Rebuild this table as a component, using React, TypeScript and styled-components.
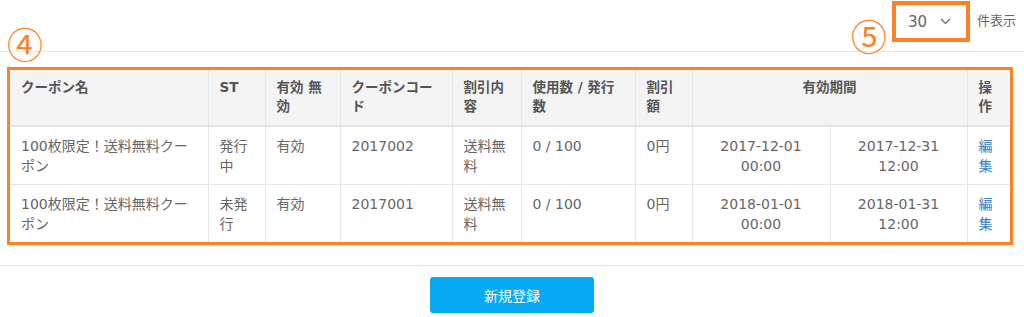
import React from 'react';
import styled, { createGlobalStyle } from 'styled-components';

const GlobalStyle = createGlobalStyle`
  html, body {
    margin: 0;
    padding: 0;
    background: #fff;
  }
  body {
    font-family: "DejaVu Sans", "Noto Sans CJK JP", sans-serif;
    font-size: 14px;
    color: #666;
  }
`;

const ORANGE = '#fb8226';
const FONT = '"DejaVu Sans", "Noto Sans CJK JP", sans-serif';

type Coupon = {
  name: string;
  status: string;
  valid: string;
  code: string;
  content: string;
  usage: string;
  discount: string;
  from: [string, string];
  to: [string, string];
};

const coupons: Coupon[] = [
  {
    name: '100枚限定！送料無料クーポン',
    status: '発行中',
    valid: '有効',
    code: '2017002',
    content: '送料無料',
    usage: '0 / 100',
    discount: '0円',
    from: ['2017-12-01', '00:00'],
    to: ['2017-12-31', '12:00'],
  },
  {
    name: '100枚限定！送料無料クーポン',
    status: '未発行',
    valid: '有効',
    code: '2017001',
    content: '送料無料',
    usage: '0 / 100',
    discount: '0円',
    from: ['2018-01-01', '00:00'],
    to: ['2018-01-31', '12:00'],
  },
];

const widths = [198, 57, 75, 112, 69, 114, 57, 138, 137, 43];

function App() {
  return (
    <Page>
      <GlobalStyle />
      <TopBar>
        <Marker style={{ left: 7, top: 25 }}>④</Marker>
        <Marker style={{ left: 851, top: 17 }}>⑤</Marker>
        <SelectBox>
          <span>30</span>
          <svg width="11" height="7" viewBox="0 0 11 7">
            <polyline points="1,1 5.5,5.5 10,1" fill="none" stroke="#666" strokeWidth="1.2" />
          </svg>
        </SelectBox>
        <PerPage>件表示</PerPage>
      </TopBar>

      <TableArea>
        <Frame>
          <Table>
            <colgroup>
              {widths.map((w, i) => (
                <col key={i} style={{ width: w }} />
              ))}
            </colgroup>
            <thead>
              <tr>
                <Th>クーポン名</Th>
                <Th>ST</Th>
                <Th>有効 無効</Th>
                <Th>クーポンコード</Th>
                <Th>割引内容</Th>
                <Th>使用数 / 発行数</Th>
                <Th>割引額</Th>
                <Th colSpan={2} $center>有効期間</Th>
                <Th>操作</Th>
              </tr>
            </thead>
            <tbody>
              {coupons.map((c, i) => (
                <tr key={i}>
                  <Td>{c.name}</Td>
                  <Td>{c.status}</Td>
                  <Td>{c.valid}</Td>
                  <Td>{c.code}</Td>
                  <Td>{c.content}</Td>
                  <Td>{c.usage}</Td>
                  <Td>{c.discount}</Td>
                  <Td $center>
                    {c.from[0]}
                    <br />
                    {c.from[1]}
                  </Td>
                  <Td $center>
                    {c.to[0]}
                    <br />
                    {c.to[1]}
                  </Td>
                  <Td>
                    <EditLink href="#">編集</EditLink>
                  </Td>
                </tr>
              ))}
            </tbody>
          </Table>
        </Frame>
      </TableArea>

      <Footer>
        <PrimaryButton>新規登録</PrimaryButton>
      </Footer>
    </Page>
  );
}

export default App;

const Page = styled.div`
  position: relative;
  width: 1024px;
  height: 317px;
  overflow: hidden;
`;

const TopBar = styled.div`
  height: 52px;
  border-bottom: 1px solid #e6e9ec;
  display: flex;
  align-items: flex-start;
  justify-content: flex-end;
  padding-right: 8px;
  box-sizing: border-box;
`;

const Marker = styled.div`
  position: absolute;
  font-size: 36px;
  line-height: 1;
  color: ${ORANGE};
  font-family: "Noto Sans CJK JP", sans-serif;
  pointer-events: none;
`;

const SelectBox = styled.div`
  margin-top: 1px;
  width: 78px;
  height: 41px;
  box-sizing: border-box;
  border: 4px solid ${ORANGE};
  display: flex;
  align-items: center;
  padding: 0 15px 0 12px;
  justify-content: space-between;
  font-size: 15px;
  color: #666;
  font-family: ${FONT};

  svg {
    display: block;
  }
`;

const PerPage = styled.span`
  margin-left: 7px;
  margin-top: 10px;
  font-size: 13px;
  color: #666;
  font-family: "Noto Sans CJK JP", sans-serif;
`;

const TableArea = styled.div`
  padding: 15px 11px 0 7px;
`;

const Frame = styled.div`
  border: 3px solid ${ORANGE};
`;

const Table = styled.table`
  width: 1000px;
  border-collapse: collapse;
  table-layout: fixed;
  font-size: 14px;
  line-height: 20px;
  font-family: ${FONT};
`;

const Th = styled.th<{ $center?: boolean }>`
  background: #f4f4f4;
  color: #555;
  font-weight: bold;
  text-align: ${(p) => (p.$center ? 'center' : 'left')};
  vertical-align: top;
  padding: 8px 11px 9px;
  line-height: 19px;
  font-size: 13.5px;
  border-left: 1px solid #e6e6e6;
  border-bottom: 2px solid #e3e3e3;
  &:first-child {
    border-left: none;
  }
`;

const Td = styled.td<{ $center?: boolean }>`
  text-align: ${(p) => (p.$center ? 'center' : 'left')};
  vertical-align: top;
  padding: 9px 11px 8px;
  color: #666;
  border-left: 1px solid #e6e6e6;
  border-top: 1px solid #e6e6e6;
  &:first-child {
    border-left: none;
  }
  tr:first-child > & {
    border-top: none;
  }
`;

const EditLink = styled.a`
  color: #3a7fc1;
  text-decoration: none;
`;

const Footer = styled.div`
  margin-top: 20px;
  border-top: 1px solid #e6e9ec;
  padding-top: 11px;
  display: flex;
  justify-content: center;
`;

const PrimaryButton = styled.button`
  width: 164px;
  height: 36px;
  border: none;
  border-radius: 3px;
  background: #06aaf4;
  color: #fff;
  font-family: "Noto Sans CJK JP", sans-serif;
  font-size: 14px;
  cursor: pointer;
`;
